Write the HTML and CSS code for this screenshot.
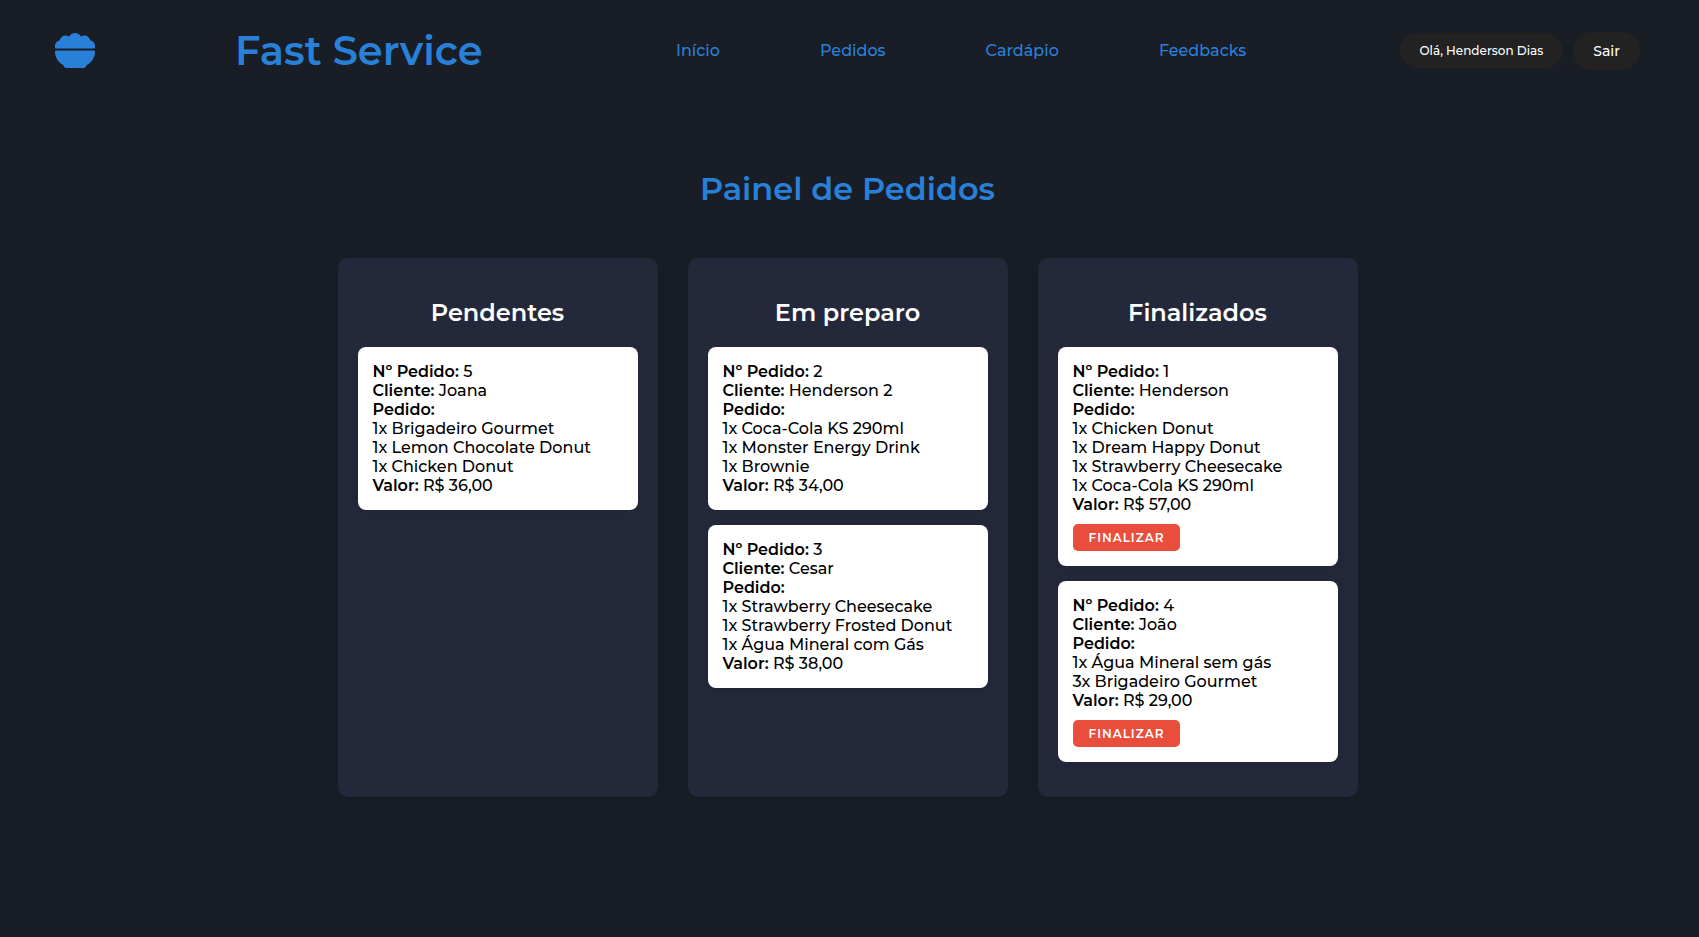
FILE: index.html
```html
<!DOCTYPE html>
<html lang="pt-BR">
<head>
<meta charset="utf-8">
<meta name="viewport" content="width=device-width, initial-scale=1">
<title>Fast Service</title>
<link rel="stylesheet" href="styles.css">
</head>
<body>
<header class="header">
  <svg class="logo" viewBox="0 0 40 35" aria-hidden="true">
    <path d="M1 15.500Q0 15.500 0 14.300V12.500C0 10 2 7.800 4.600 7.500C5.300 4.500 7.800 2.500 10.500 2.500C11.700 2.500 12.900 2.800 14 3.400C15.200 1.300 17.400 0 20 0C22.600 0 24.800 1.300 26 3.400C27.100 2.800 28.300 2.500 29.500 2.500C32.200 2.500 34.700 4.500 35.400 7.500C38 7.800 40 10 40 12.500V14.300Q40 15.500 39 15.500Z"/>
    <path d="M1 17.500H39Q40 17.500 40 18.600C40 24.300 37 29.500 31.500 32.200C31.200 34 30.200 35 28.500 35H11.500C9.800 35 8.800 34 8.500 32.200C3 29.500 0 24.300 0 18.600Q0 17.500 1 17.500Z"/>
  </svg>
  <h1 class="brand">Fast Service</h1>
  <nav class="nav">
    <a href="#inicio">Início</a>
    <a href="#pedidos">Pedidos</a>
    <a href="#cardapio">Cardápio</a>
    <a href="#feedbacks">Feedbacks</a>
  </nav>
  <div class="account">
    <span class="pill greeting">Olá, Henderson Dias</span>
    <button class="pill logout" type="button">Sair</button>
  </div>
</header>
<main class="panel">
  <h2 class="panel-title">Painel de Pedidos</h2>
  <div class="board">
    <section class="column">
      <h3>Pendentes</h3>
      <article class="card">
        <p><strong>Nº Pedido:</strong> 5</p>
        <p><strong>Cliente:</strong> Joana</p>
        <p><strong>Pedido:</strong></p>
        <p>1x Brigadeiro Gourmet</p>
        <p>1x Lemon Chocolate Donut</p>
        <p>1x Chicken Donut</p>
        <p><strong>Valor:</strong> R$ 36,00</p>
      </article>
    </section>
    <section class="column">
      <h3>Em preparo</h3>
      <article class="card">
        <p><strong>Nº Pedido:</strong> 2</p>
        <p><strong>Cliente:</strong> Henderson 2</p>
        <p><strong>Pedido:</strong></p>
        <p>1x Coca-Cola KS 290ml</p>
        <p>1x Monster Energy Drink</p>
        <p>1x Brownie</p>
        <p><strong>Valor:</strong> R$ 34,00</p>
      </article>
      <article class="card">
        <p><strong>Nº Pedido:</strong> 3</p>
        <p><strong>Cliente:</strong> Cesar</p>
        <p><strong>Pedido:</strong></p>
        <p>1x Strawberry Cheesecake</p>
        <p>1x Strawberry Frosted Donut</p>
        <p>1x Água Mineral com Gás</p>
        <p><strong>Valor:</strong> R$ 38,00</p>
      </article>
    </section>
    <section class="column">
      <h3>Finalizados</h3>
      <article class="card">
        <p><strong>Nº Pedido:</strong> 1</p>
        <p><strong>Cliente:</strong> Henderson</p>
        <p><strong>Pedido:</strong></p>
        <p>1x Chicken Donut</p>
        <p>1x Dream Happy Donut</p>
        <p>1x Strawberry Cheesecake</p>
        <p>1x Coca-Cola KS 290ml</p>
        <p><strong>Valor:</strong> R$ 57,00</p>
        <button class="finish" type="button">FINALIZAR</button>
      </article>
      <article class="card">
        <p><strong>Nº Pedido:</strong> 4</p>
        <p><strong>Cliente:</strong> João</p>
        <p><strong>Pedido:</strong></p>
        <p>1x Água Mineral sem gás</p>
        <p>3x Brigadeiro Gourmet</p>
        <p><strong>Valor:</strong> R$ 29,00</p>
        <button class="finish" type="button">FINALIZAR</button>
      </article>
    </section>
  </div>
</main>
</body>
</html>
```

FILE: styles.css
```css
* {
  box-sizing: border-box;
  margin: 0;
  padding: 0;
}

body {
  min-height: 100vh;
  background: #191d25;
  color: #000;
  font-family: Montserrat, Inter, sans-serif;
  font-size: 16px;
}

button {
  border: 0;
  font-family: inherit;
  cursor: pointer;
}

.header {
  display: grid;
  grid-template-columns: 180px 441px 1fr auto;
  align-items: center;
  height: 101px;
  padding: 0 59px 0 55px;
}

.logo {
  width: 40px;
  height: 35px;
  fill: #2980d9;
}

.brand {
  color: #2980d9;
  font-size: 40px;
  font-weight: 600;
  white-space: nowrap;
}

.nav {
  display: flex;
  gap: 100px;
}

.nav a {
  color: #2980d9;
  font-weight: 500;
  text-decoration: none;
}

.account {
  display: flex;
  align-items: center;
  gap: 10px;
}

.pill {
  padding: 0 20px;
  border-radius: 20px;
  background: #222;
  color: #fff;
  font-weight: 500;
  white-space: nowrap;
}

.greeting {
  font-size: 12px;
  line-height: 35px;
}

.logout {
  font-size: 14px;
  line-height: 38px;
}

.panel {
  padding: 68px 4px 40px 0;
}

.panel-title {
  margin-bottom: 50px;
  color: #2980d9;
  font-size: 32px;
  font-weight: 600;
  line-height: 39px;
  text-align: center;
}

.board {
  display: flex;
  justify-content: center;
  gap: 30px;
}

.column {
  width: 320px;
  padding: 20px 20px 35px;
  border-radius: 10px;
  background: #24283b;
  box-shadow: 0 4px 12px rgba(0, 0, 0, 0.1);
}

.column h3 {
  margin: 20px 0;
  color: #fff;
  font-size: 24px;
  font-weight: 600;
  line-height: 29px;
  text-align: center;
}

.card {
  padding: 15px;
  border-radius: 8px;
  background: #fff;
  box-shadow: 0 2px 8px rgba(0, 0, 0, 0.1);
  font-weight: 500;
  line-height: 19px;
}

.card + .card {
  margin-top: 15px;
}

.card strong {
  font-weight: 600;
}

.finish {
  display: block;
  margin-top: 10px;
  padding: 0 16px;
  border-radius: 5px;
  background: #e94e3d;
  color: #fff;
  font-size: 12px;
  font-weight: 600;
  letter-spacing: 1px;
  line-height: 27px;
}
```
